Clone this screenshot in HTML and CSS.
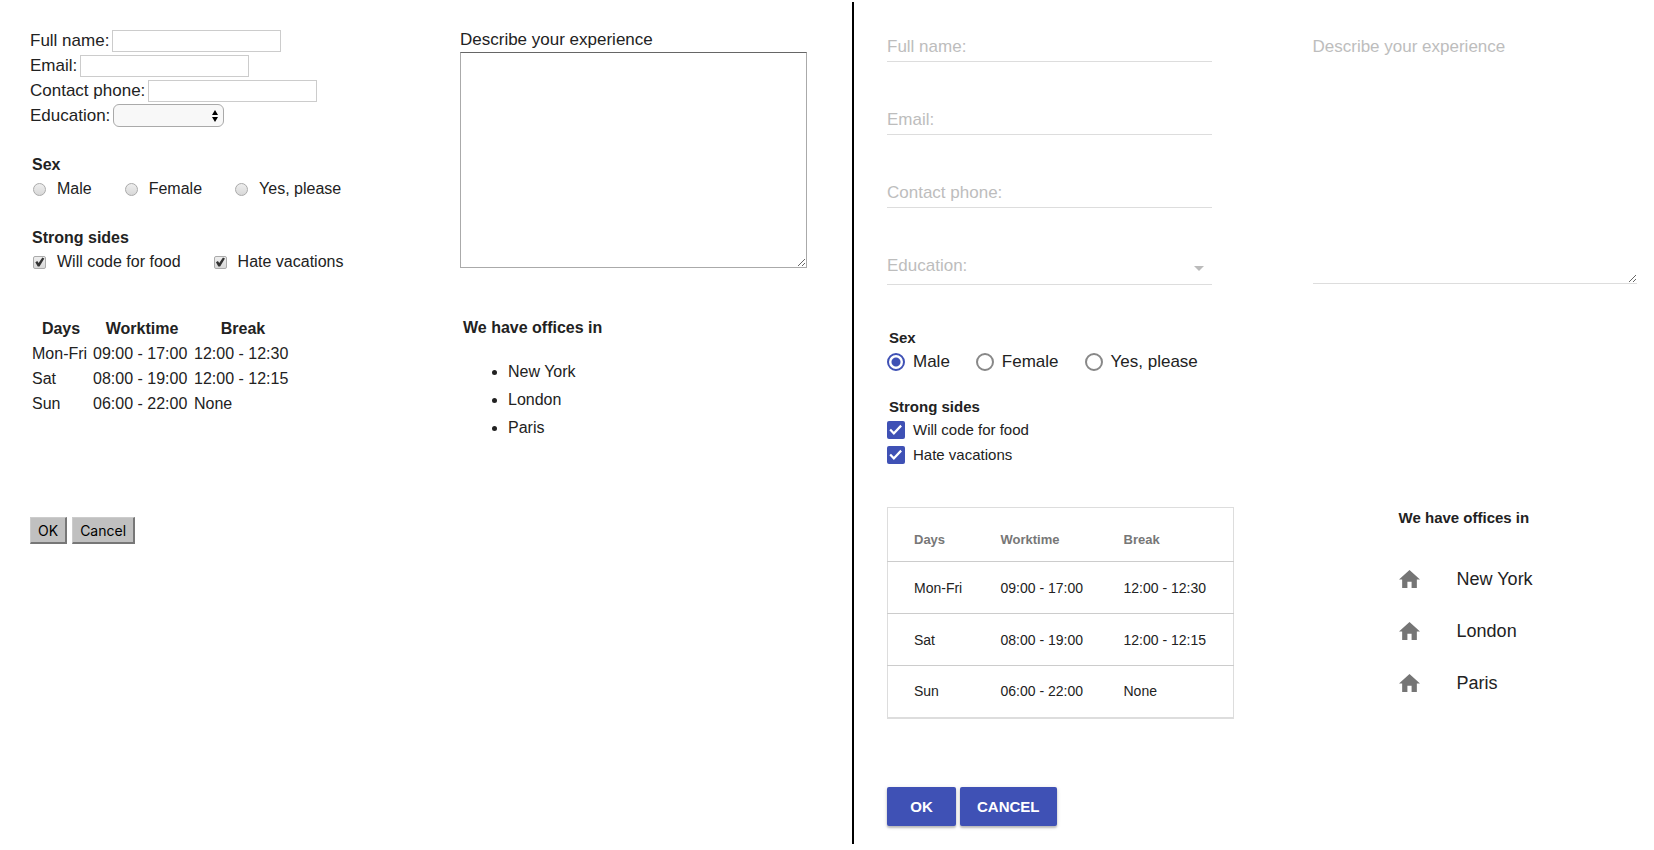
FILE: index.html
```html
<!DOCTYPE html>
<html lang="en">
<head>
    <meta charset="UTF-8">
    <meta name="viewport" content="width=device-width, initial-scale=1.0">
    <title>Plain form and material form</title>
    <link rel="stylesheet" href="styles.css">
</head>
<body>
    <main class="compare">
        <!-- Browser look -->
        <form class="panel plain">
            <div class="plain-top">
                <div>
                    <div class="row">
                        <label for="p-name">Full name:</label>
                        <input type="text" id="p-name">
                    </div>
                    <div class="row">
                        <label for="p-email">Email:</label>
                        <input type="text" id="p-email">
                    </div>
                    <div class="row">
                        <label for="p-phone">Contact phone:</label>
                        <input type="text" id="p-phone">
                    </div>
                    <div class="row">
                        <label for="p-edu">Education:</label>
                        <div class="select-wrap">
                            <select id="p-edu"><option></option></select>
                            <svg class="updown" viewBox="0 0 6 12" width="6" height="12"><path d="M3 0l3 5H0zM3 12l3-5H0z"/></svg>
                        </div>
                    </div>
                    <fieldset>
                        <legend>Sex</legend>
                        <div class="options">
                            <label><input type="radio" name="p-sex">Male</label>
                            <label><input type="radio" name="p-sex">Female</label>
                            <label><input type="radio" name="p-sex">Yes, please</label>
                        </div>
                    </fieldset>
                    <fieldset>
                        <legend>Strong sides</legend>
                        <div class="options">
                            <label><input type="checkbox" checked>Will code for food</label>
                            <label><input type="checkbox" checked>Hate vacations</label>
                        </div>
                    </fieldset>
                </div>
                <div class="experience">
                    <label for="p-exp">Describe your experience</label>
                    <textarea id="p-exp"></textarea>
                </div>
            </div>
            <div class="plain-bottom">
                <div>
                    <table>
                        <thead>
                            <tr><th>Days</th><th>Worktime</th><th>Break</th></tr>
                        </thead>
                        <tbody>
                            <tr><td>Mon-Fri</td><td>09:00 - 17:00</td><td>12:00 - 12:30</td></tr>
                            <tr><td>Sat</td><td>08:00 - 19:00</td><td>12:00 - 12:15</td></tr>
                            <tr><td>Sun</td><td>06:00 - 22:00</td><td>None</td></tr>
                        </tbody>
                    </table>
                </div>
                <div class="offices">
                    <h4>We have offices in</h4>
                    <ul>
                        <li>New York</li>
                        <li>London</li>
                        <li>Paris</li>
                    </ul>
                </div>
            </div>
            <div class="buttons">
                <button type="button">OK</button>
                <button type="button">Cancel</button>
            </div>
        </form>

        <!-- Material look -->
        <form class="panel material">
            <div class="material-top">
                <div>
                    <div class="field">
                        <input type="text" id="m-name">
                        <label for="m-name">Full name:</label>
                    </div>
                    <div class="field">
                        <input type="text" id="m-email">
                        <label for="m-email">Email:</label>
                    </div>
                    <div class="field">
                        <input type="text" id="m-phone">
                        <label for="m-phone">Contact phone:</label>
                    </div>
                    <div class="field">
                        <select id="m-edu"><option></option></select>
                        <label for="m-edu">Education:</label>
                        <svg class="arrow" viewBox="0 0 10 5" width="10" height="5"><path d="M0 0h10L5 5z"/></svg>
                    </div>
                </div>
                <div class="field">
                    <textarea id="m-exp"></textarea>
                    <label for="m-exp">Describe your experience</label>
                </div>
            </div>
            <fieldset class="sex">
                <legend>Sex</legend>
                <div class="options">
                    <label><input type="radio" name="m-sex" checked>Male</label>
                    <label><input type="radio" name="m-sex">Female</label>
                    <label><input type="radio" name="m-sex">Yes, please</label>
                </div>
            </fieldset>
            <fieldset class="sides">
                <legend>Strong sides</legend>
                <label><input type="checkbox" checked>Will code for food</label>
                <label><input type="checkbox" checked>Hate vacations</label>
            </fieldset>
            <div class="material-bottom">
                <table>
                    <thead>
                        <tr><th>Days</th><th>Worktime</th><th>Break</th></tr>
                    </thead>
                    <tbody>
                        <tr><td>Mon-Fri</td><td>09:00 - 17:00</td><td>12:00 - 12:30</td></tr>
                        <tr><td>Sat</td><td>08:00 - 19:00</td><td>12:00 - 12:15</td></tr>
                        <tr><td>Sun</td><td>06:00 - 22:00</td><td>None</td></tr>
                    </tbody>
                </table>
                <div class="offices">
                    <h4>We have offices in</h4>
                    <ul>
                        <li><svg class="home" viewBox="2 3 20 17" width="21" height="18"><path d="M10 20v-6h4v6h5v-8h3L12 3 2 12h3v8z"/></svg>New York</li>
                        <li><svg class="home" viewBox="2 3 20 17" width="21" height="18"><path d="M10 20v-6h4v6h5v-8h3L12 3 2 12h3v8z"/></svg>London</li>
                        <li><svg class="home" viewBox="2 3 20 17" width="21" height="18"><path d="M10 20v-6h4v6h5v-8h3L12 3 2 12h3v8z"/></svg>Paris</li>
                    </ul>
                </div>
            </div>
            <div class="buttons">
                <button type="button">OK</button>
                <button type="button">CANCEL</button>
            </div>
        </form>
    </main>
</body>
</html>
```
FILE: styles.css
```css
* {
    box-sizing: border-box;
}
body {
    margin: 0;
    padding: 2px 0 6px;
    background: #fff;
    color: #222;
    font-family: "Liberation Sans", Arial, sans-serif;
    font-size: 17px;
}
.compare {
    display: grid;
    grid-template-columns: 854fr 800fr;
    min-height: calc(100vh - 8px);
}
fieldset {
    border: 0;
    margin: 0;
    padding: 0;
    min-width: 0;
}
legend {
    padding: 0 2px;
    font-weight: bold;
}
h4, ul {
    margin: 0;
    padding: 0;
}
input, select, textarea {
    margin: 0;
    font: inherit;
}
textarea {
    display: block;
    width: 100%;
    resize: both;
}
.options, .options label, .buttons {
    display: flex;
    align-items: center;
}

/* plain */
.plain {
    padding: 26px 45px 20px 30px;
    border-right: 2px solid #000;
}
.plain-top, .plain-bottom {
    display: grid;
    grid-template-columns: 430fr 347fr;
}
.plain .row {
    display: flex;
    align-items: center;
    gap: 3px;
    height: 25px;
    line-height: 24px;
}
.plain .row input {
    width: 169px;
    height: 22px;
    border: 1px solid #ccc;
}
.select-wrap {
    position: relative;
    height: 23px;
}
.plain select {
    appearance: none;
    width: 111px;
    height: 23px;
    border: 1px solid #aaa;
    border-radius: 6px;
    background: #f8f8f8;
}
.updown {
    position: absolute;
    right: 6px;
    top: 6px;
    pointer-events: none;
}
.plain fieldset {
    margin-top: 25px;
    font-size: 16px;
    line-height: 24px;
}
.plain .options {
    gap: 33px;
    padding-left: 3px;
}
.plain .options label {
    gap: 11px;
}
.plain .options input {
    appearance: none;
    width: 13px;
    height: 13px;
    border: 1px solid #aaa;
    background: linear-gradient(#eee, #d8d8d8);
}
.plain input[type="radio"] {
    border-radius: 50%;
}
.plain input[type="checkbox"] {
    border-radius: 2px;
}
.plain input[type="checkbox"]::before {
    content: "";
    display: block;
    width: 11px;
    height: 11px;
    background: #333;
    clip-path: polygon(12% 52%, 30% 42%, 42% 60%, 76% 8%, 94% 18%, 50% 92%, 34% 92%);
}
.experience label {
    display: block;
    line-height: 24px;
}
.plain textarea {
    height: 216px;
    border: 1px solid #aaa;
    border-top-color: #666;
}
.plain-bottom {
    margin-top: 42px;
}
.plain table {
    border-spacing: 1px 0;
    font-size: 16px;
}
.plain th, .plain td {
    padding: 0 1px;
    height: 25px;
    line-height: 25px;
    text-align: left;
}
.plain th {
    width: 100px;
    text-align: center;
}
.plain th:first-child {
    width: 60px;
}
.plain .offices {
    font-size: 16px;
}
.plain h4 {
    padding: 0 3px;
    line-height: 24px;
}
.plain ul {
    margin-top: 18px;
    padding-left: 48px;
    line-height: 28px;
}
.plain .buttons {
    gap: 5px;
    margin-top: 75px;
}
.plain button {
    height: 27px;
    padding: 0 7px;
    border: 1px solid #ccc;
    border-right: 2px solid #777;
    border-bottom: 2px solid #777;
    background: #c0c0c0;
    color: #000;
    font-family: Inter, sans-serif;
    font-size: 14px;
}

/* material */
.material {
    padding: 28px 17px 17px 33px;
}
.material-top {
    display: grid;
    grid-template-columns: 1fr 1fr;
    column-gap: 101px;
}
.field {
    position: relative;
}
.field + .field {
    margin-top: 41px;
}
.field input, .field select, .field textarea {
    display: block;
    width: 100%;
    height: 32px;
    border: 0;
    border-bottom: 1px solid #ddd;
    background: none;
}
.field select {
    appearance: none;
    height: 36px;
}
.field textarea {
    height: 254px;
}
.field label {
    position: absolute;
    left: 0;
    top: 5px;
    line-height: 24px;
    color: #bdbdbd;
    pointer-events: none;
}
.arrow {
    position: absolute;
    right: 8px;
    top: 17px;
    fill: #bbb;
    pointer-events: none;
}
.sex {
    margin-top: 42px;
}
.material legend {
    font-size: 15px;
    line-height: 22px;
}
.material .options {
    gap: 26px;
}
.material .options label, .sides label {
    display: flex;
    align-items: center;
    gap: 8px;
    line-height: 25px;
}
.sides {
    margin-top: 22px;
    font-size: 15px;
}
.sides legend {
    line-height: 21px;
}
.material input[type="radio"] {
    appearance: none;
    width: 18px;
    height: 18px;
    border: 2px solid #888;
    border-radius: 50%;
}
.material input[type="radio"]:checked {
    border-color: #3f51b5;
    background: radial-gradient(circle, #3f51b5 4px, transparent 5px);
}
.material input[type="checkbox"] {
    appearance: none;
    width: 18px;
    height: 18px;
    border-radius: 2px;
    background: #3f51b5;
}
.material input[type="checkbox"]::before {
    content: "";
    display: block;
    width: 18px;
    height: 18px;
    background: #fff;
    clip-path: polygon(13% 54%, 22% 46%, 38% 62%, 74% 24%, 83% 33%, 38% 80%);
}
.material-bottom {
    display: grid;
    grid-template-columns: 346fr 238fr;
    column-gap: 165px;
    align-items: start;
    margin-top: 40px;
}
.material table {
    width: 100%;
    border: 1px solid #ddd;
    border-bottom-width: 2px;
    border-collapse: collapse;
    font-size: 14px;
}
.material th, .material td {
    height: 52px;
    padding: 0;
    border-top: 1px solid #ccc;
    text-align: left;
}
.material th {
    height: 54px;
    padding-top: 10px;
    border-top: 0;
    color: #777;
    font-size: 13px;
}
.material th:first-child, .material td:first-child {
    width: 113px;
    padding-left: 26px;
}
.material th:nth-child(2) {
    width: 123px;
}
.material h4 {
    font-size: 15px;
    line-height: 22px;
}
.material ul {
    margin-top: 24px;
    list-style: none;
    font-size: 18px;
}
.material li {
    display: flex;
    align-items: center;
    gap: 37px;
    height: 52px;
}
.home {
    fill: #757575;
}
.material .buttons {
    gap: 4px;
    margin-top: 68px;
}
.material button {
    min-width: 69px;
    height: 39px;
    padding: 0 17px;
    border: 0;
    border-radius: 2px;
    background: #3f51b5;
    box-shadow: 0 2px 2px rgba(0,0,0,0.2), 0 1px 4px rgba(0,0,0,0.15);
    color: #fff;
    font-family: inherit;
    font-size: 15px;
    font-weight: bold;
}
```
